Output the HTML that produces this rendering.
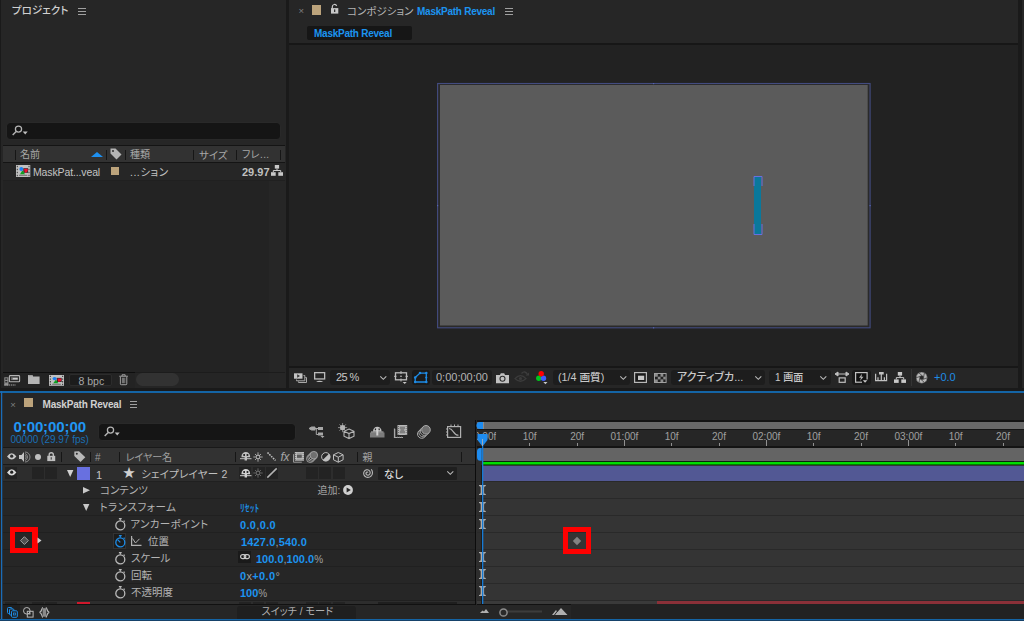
<!DOCTYPE html>
<html lang="ja">
<head>
<meta charset="utf-8">
<title>MaskPath Reveal</title>
<style>
html,body{margin:0;padding:0;}
body{width:1024px;height:621px;overflow:hidden;background:#1a1a1a;position:relative;
 font-family:"Liberation Sans","Noto Sans CJK JP",sans-serif;font-size:11px;color:#b4b4b4;}
.a{position:absolute;}
.t{position:absolute;white-space:nowrap;line-height:14px;}
.blue{color:#1c94f0;}
svg{position:absolute;overflow:visible;}
/* PANELS */
#proj{left:1px;top:0;width:285px;height:388px;background:#262626;}
#comp{left:289px;top:0;width:735px;height:388px;background:#262626;}
#viewer{left:289px;top:45px;width:735px;height:321px;background:#222222;}
#tl{left:0;top:393px;width:1024px;height:228px;background:#262626;}
#blueline{left:0;top:391px;width:1024px;height:2px;background:#1464a5;}

/* PROJECT */
.jp{font-feature-settings:"palt";}
#p_title{left:12px;top:3px;font-size:10.500px;color:#d0d0d0;font-weight:500;}
#p_search{left:7px;top:123px;width:273px;height:16px;background:#151515;border-radius:3.500px;box-shadow:0 0 0 0.500px #2c2c2c;}
#p_head{left:3px;top:145px;width:282px;height:18px;background:#141414;}
#p_head i{position:absolute;top:1px;height:16px;background:#323232;}
#p_row{left:3px;top:163px;width:282px;height:17px;background:#262626;border-bottom:1px solid #202020;}
.hsep{position:absolute;top:150px;width:1px;height:10px;background:#161616;}
#p_foot{left:3px;top:372px;width:282px;height:1px;background:#1c1c1c;}
#p_footbg{left:1px;top:373px;width:268px;height:15px;background:#232323;}
#p_foot2{left:3px;top:372px;width:132px;height:1px;background:#0e0e0e;}
#p_list{left:3px;top:181px;width:266px;height:191px;background:#232323;}
#p_colbg{left:269px;top:181px;width:16px;height:191px;background:#262626;}

/* COMP */
#c_tab{left:307px;top:26px;width:105px;height:14px;background:#161616;border-radius:2px;}
#c_line{left:289px;top:43px;width:735px;height:2px;background:#171717;}
#c_fline{left:289px;top:366px;width:735px;height:2px;background:#171717;}
#canvas{left:440px;top:85px;width:428px;height:241px;background:#5b5b5b;}
.dd{position:absolute;top:370px;height:15px;background:#1d1d1d;border-radius:3px;}
.ft{top:370px;font-size:11px;line-height:15px;color:#c8c8c8;}

/* TIMELINE */
#tl_l{left:1px;top:391px;width:1px;height:230px;background:#1a6cb8;box-shadow:1px 0 0 rgba(26,108,184,0.250);z-index:9;}
#tl_b{left:0;top:619px;width:1024px;height:1px;background:#1464a5;box-shadow:0 1px 0 #16426a, 0 2px 0 #1a1a1a;z-index:9;}
#tl_search{left:99px;top:424px;width:196px;height:15.500px;background:#151515;border-radius:3.500px;box-shadow:0 0 0 0.500px #2c2c2c;}
#tl_hdr{left:3px;top:447px;width:472px;height:18px;background:#191919;}
#tl_hdr i{position:absolute;left:0;top:1px;width:472px;height:16px;background:#323232;}
#tl_lrow{left:3px;top:465px;width:472px;height:16px;background:#2d2d2d;}
.rl{position:absolute;left:3px;width:472px;height:1px;background:#202020;}
.sw{position:absolute;top:467px;width:12px;height:12px;background:#232323;}
.tsep{position:absolute;top:452px;width:1px;height:10px;background:#161616;}
.pn{font-size:10.5px;color:#b4b4b4;}
.pv{font-size:11px;font-weight:bold;color:#1c94f0;margin-top:1px;}
.pv b{color:#a0a0a0;font-weight:normal;}
.pv b.s{font-size:10px;}
#trk{left:477px;top:465px;width:547px;height:139px;background:#343434;}
.trl{z-index:2;position:absolute;left:477px;width:547px;height:1px;background:#292929;}
#tdiv{left:475px;top:420px;width:1px;height:185px;background:#0c0c0c;}
.rt{font-size:10px;color:#a0a0a0;clip-path:inset(0 0 0 var(--c,0));}
</style>
</head>
<body>
<!-- ================= PROJECT PANEL ================= -->
<div id="proj" class="a"></div>
<div id="p_title" class="t jp">プロジェクト</div>
<svg style="left:78px;top:8px" width="9" height="7" viewBox="0 0 9 7"><path d="M0 .5h8M0 3.5h8M0 6.5h8" stroke="#a0a0a0" stroke-width="1" fill="none"/></svg>
<div id="p_search" class="a"></div>
<svg style="left:12px;top:125px" width="16" height="12" viewBox="0 0 16 12"><circle cx="6.500" cy="4.100" r="3.100" fill="none" stroke="#b4b4b4" stroke-width="1.250"/><path d="M4.200 6.500L0.700 10" stroke="#b4b4b4" stroke-width="1.400"/><path d="M10.700 6.500h5l-2.500 3z" fill="#c0c0c0"/></svg>
<div id="p_head" class="a"><i style="left:0;width:282px"></i></div>
<div class="hsep" style="left:15px"></div>
<div class="hsep" style="left:106px"></div>
<div class="hsep" style="left:125px"></div>
<div class="hsep" style="left:193px"></div>
<div class="hsep" style="left:236px"></div>
<div class="hsep" style="left:280px"></div>
<div class="t jp" style="left:20px;top:148px;font-size:10px;color:#a8a8a8">名前</div>
<svg style="left:91px;top:152px" width="12" height="5" viewBox="0 0 12 5"><path d="M0 5L6 0L12 5z" fill="#1e90f0"/></svg>
<svg style="left:110px;top:148px" width="12" height="12" viewBox="0 0 12 12"><path d="M0.5 0.5h5l6 6-5 5-6-6z" fill="#b4b4b4"/><circle cx="3" cy="3" r="1" fill="#303030"/></svg>
<div class="t jp" style="left:130px;top:148px;font-size:10px;color:#a8a8a8">種類</div>
<div class="t jp" style="left:199px;top:148px;font-size:10.500px;color:#a8a8a8">サイズ</div>
<div class="t jp" style="left:242px;top:148px;font-size:10px;color:#a8a8a8;letter-spacing:0.400px">フレ...</div>
<div id="p_row" class="a"></div>
<div id="p_colbg" class="a"></div>
<div class="t" style="left:33px;top:165px;font-size:10.500px;color:#c4c4c4;letter-spacing:-0.130px">MaskPat...veal</div>
<div class="a" style="left:111px;top:167px;width:8px;height:8px;background:#bca37b"></div>
<div class="t jp" style="left:130px;top:165px;font-size:10.500px;color:#c4c4c4;letter-spacing:0.500px">...ション</div>
<div class="t" style="left:242px;top:165px;font-size:11px;font-weight:bold;color:#c0c0c0">29.97</div>
<div id="p_list" class="a"></div>
<div id="p_foot" class="a"></div>
<div id="p_foot2" class="a"></div>
<div id="p_footbg" class="a"></div>

<!-- project icons -->
<svg style="left:16px;top:165px" width="14.3" height="12" viewBox="0 0 14.300 12" preserveAspectRatio="none"><rect x="0" y="0" width="14.300" height="12" fill="#c0c0c0"/><path d="M1.300 0.800v11M13 0.800v11" stroke="#3a3a3a" stroke-width="1" stroke-dasharray="1.400 1.600"/><path d="M3 10.300h8.300" stroke="#555" stroke-width="0.800"/><rect x="7.300" y="3.200" width="4.800" height="4.600" fill="#2a2a2a"/><path d="M8 3.800h3.700v2.300q-1 2-3 1.400z" fill="#f01030"/><path d="M6.500 5.300L9 9.300H4z" fill="#10a020"/><circle cx="5.300" cy="4" r="1.900" fill="#1e80f0"/></svg>
<svg style="left:271px;top:165.400px" width="12" height="11" viewBox="0 0 12 11"><rect x="3.800" y="0" width="4.300" height="3.600" fill="#c8c8c8"/><rect x="0" y="7.200" width="4.700" height="3.600" fill="#c8c8c8"/><rect x="7.300" y="7.200" width="4.700" height="3.600" fill="#c8c8c8"/><path d="M6 3.600v2M2.300 7.200V5.500h7.400v1.700" fill="none" stroke="#c8c8c8" stroke-width="1"/></svg>
<svg style="left:4px;top:375px" width="16" height="11" viewBox="0 0 16 11"><rect x="0.300" y="2.300" width="4.200" height="8.200" fill="#8c8c8c"/><rect x="1.300" y="3.300" width="2" height="1.500" fill="#2a2a2a"/><rect x="1.300" y="6" width="2" height="1.500" fill="#2a2a2a"/><path d="M0.300 10h11.500" stroke="#a8a8a8" stroke-width="1" stroke-dasharray="1.500 0.700"/><rect x="5.400" y="0.600" width="10.200" height="6.200" rx="0.800" fill="#2a2a2a" stroke="#b4b4b4" stroke-width="1.100"/><rect x="7.200" y="2.600" width="6.600" height="2.100" fill="#c8c8c8"/><rect x="7.200" y="2.600" width="1.400" height="2.100" fill="#555"/></svg>
<svg style="left:28.400px;top:374.500px" width="12" height="9" viewBox="0 0 12 9"><path d="M0 0h4.500l0.600 1.500H11.600V8.900H0z" fill="#b4b4b4"/><path d="M0.500 0.700h3.600" stroke="#8a8a8a" stroke-width="0.700"/></svg>
<svg style="left:49px;top:374.5px" width="15" height="10.8" viewBox="0 0 14.300 12" preserveAspectRatio="none"><rect x="0" y="0" width="14.300" height="12" fill="#c0c0c0"/><path d="M1.300 0.800v11M13 0.800v11" stroke="#3a3a3a" stroke-width="1" stroke-dasharray="1.400 1.600"/><path d="M3 10.300h8.300" stroke="#555" stroke-width="0.800"/><rect x="7.300" y="3.200" width="4.800" height="4.600" fill="#2a2a2a"/><path d="M8 3.800h3.700v2.300q-1 2-3 1.400z" fill="#f01030"/><path d="M6.500 5.300L9 9.300H4z" fill="#10a020"/><circle cx="5.300" cy="4" r="1.900" fill="#1e80f0"/></svg>
<div class="a" style="left:69px;top:374px;width:43px;height:12px;background:#1c1c1c;border:1px solid #2c2c2c;border-radius:2px;box-sizing:border-box"></div>
<div class="t" style="left:78.500px;top:373.500px;font-size:10.500px;color:#a8a8a8">8 bpc</div>
<svg style="left:119px;top:373.600px" width="9.200" height="11.500" viewBox="0 0 10 12"><path d="M0.300 2.200h9.400M3.300 1.900V0.600h3.400v1.300" fill="none" stroke="#acacac" stroke-width="1"/><path d="M1.500 3v7.500Q1.500 11.400 2.500 11.400h5Q8.500 11.400 8.500 10.500V3" fill="none" stroke="#acacac" stroke-width="1"/><path d="M3.700 3.800v6M6.300 3.800v6M5 3.800v6" stroke="#a0a0a0" stroke-width="0.800"/></svg>
<div class="a" style="left:135px;top:373px;width:134px;height:15px;background:#252525"></div>
<div class="a" style="left:136px;top:373px;width:43px;height:13px;background:#323232;border-radius:7px"></div>
<!-- ================= COMPOSITION PANEL ================= -->
<div id="comp" class="a"></div>
<div class="t" style="left:298.500px;top:4px;font-size:9.500px;color:#808080">×</div>
<div class="a" style="left:312px;top:5px;width:9px;height:9.500px;background:#bca37b"></div>
<svg style="left:330.900px;top:3.800px" width="8" height="10" viewBox="0 0 8 10"><path d="M1.300 4.500V2.700a2.200 2.200 0 0 1 4.300 -0.700" fill="none" stroke="#c8c8c8" stroke-width="1.200"/><rect x="0" y="4.100" width="7.300" height="5.500" fill="#c8c8c8"/><rect x="3" y="5.400" width="1.300" height="2.600" fill="#333"/></svg>
<div class="t jp" style="left:347px;top:4px;font-size:10.500px;color:#b4b4b4">コンポジション</div>
<div class="t blue" style="left:417px;top:5px;font-size:10px;font-weight:bold;letter-spacing:-0.250px">MaskPath Reveal</div>
<svg style="left:504.500px;top:8px" width="9" height="7" viewBox="0 0 9 7"><path d="M0 .5h8M0 3.5h8M0 6.5h8" stroke="#a0a0a0" stroke-width="1" fill="none"/></svg>
<div id="c_tab" class="a"></div>
<div class="t blue" style="left:314px;top:27px;font-size:10px;font-weight:bold;letter-spacing:-0.250px">MaskPath Reveal</div>
<div id="c_line" class="a"></div>
<div id="viewer" class="a"></div>
<svg style="left:0;top:0" width="1024" height="400" viewBox="0 0 1024 400">
<rect x="437.600" y="83.500" width="432.500" height="244.300" fill="#2a2a2a" stroke="#434c80" stroke-width="1.100"/>
<rect x="440" y="85" width="427.700" height="240.500" fill="#5b5b5b"/>
<g fill="#5564b4"><rect x="653" y="83" width="1.200" height="1.200"/><rect x="653" y="327.200" width="1.200" height="1.200"/><rect x="437" y="205" width="1.200" height="1.200"/><rect x="869.500" y="205" width="1.200" height="1.200"/></g>
</svg>
<div class="a" style="left:754px;top:176px;width:7px;height:59px;background:#0a789b"></div>
<svg style="left:750px;top:172px" width="16" height="68" viewBox="0 0 16 68">
<path d="M4 14V4.5h8V14M4 52V62.5h8V52" fill="none" stroke="#6870e0" stroke-width="1"/>
</svg>
<div id="c_fline" class="a"></div>
<!-- footer controls -->
<div class="dd" style="left:330px;width:60px"></div>
<div class="t ft" style="left:336px;letter-spacing:-0.600px">25 %</div>
<div class="dd" style="left:412px;width:18px;background:#1a1a1a"></div>
<div class="dd" style="left:432px;width:60px"></div>
<div class="t ft" style="left:436px;color:#b4b4b4">0;00;00;00</div>
<div class="dd" style="left:553px;width:77px"></div>
<div class="t ft jp" style="left:558px;font-size:10.700px;font-weight:500">(1/4 画質)</div>
<div class="dd" style="left:671px;width:94px"></div>
<div class="t ft jp" style="left:677px;font-weight:500">アクティブカ...</div>
<div class="dd" style="left:769px;width:62px"></div>
<div class="t ft jp" style="left:775px;font-weight:500;font-size:10px">1 画面</div>
<div class="dd" style="left:852px;width:19px;background:#1a1a1a"></div>
<div class="a" style="left:911px;top:369px;width:1px;height:17px;background:#343434"></div>
<div class="t ft" style="left:934px;color:#1e8ce6">+0.0</div>
<!-- ================= TIMELINE PANEL ================= -->
<div class="a" style="left:1018px;top:0;width:4px;height:388px;background:#1a1a1a"></div>
<div class="a" style="left:1022px;top:0;width:2px;height:388px;background:#262626"></div>
<div id="blueline" class="a"></div>
<div id="tl" class="a"></div>
<div id="tl_l" class="a"></div>
<div id="tl_b" class="a"></div>
<!-- tab -->
<div class="t" style="left:10.300px;top:397.500px;font-size:9.500px;color:#808080">×</div>
<div class="a" style="left:24px;top:398px;width:9px;height:9px;background:#bca37b"></div>
<div class="t" style="left:42.500px;top:398px;font-size:10px;font-weight:bold;color:#d0d0d0;letter-spacing:-0.2px">MaskPath Reveal</div>
<svg style="left:130px;top:401px" width="8" height="7" viewBox="0 0 8 7"><path d="M0 .5h7M0 3.5h7M0 6.5h7" stroke="#a0a0a0" stroke-width="1" fill="none"/></svg>
<!-- timecode -->
<div class="t" style="left:13.500px;top:417.500px;font-size:15px;line-height:18px;font-weight:bold;color:#2196f3;letter-spacing:-0.100px">0;00;00;00</div>
<div class="t" style="left:10.500px;top:433px;font-size:10px;color:#1a6fb5">00000 (29.97 fps)</div>
<div id="tl_search" class="a"></div>
<svg style="left:104px;top:426px" width="16" height="12" viewBox="0 0 16 12"><circle cx="6.500" cy="4.100" r="3.100" fill="none" stroke="#b4b4b4" stroke-width="1.250"/><path d="M4.200 6.500L0.700 10" stroke="#b4b4b4" stroke-width="1.400"/><path d="M10.700 6.500h5l-2.500 3z" fill="#c0c0c0"/></svg>
<!-- column header -->
<div id="tl_hdr" class="a"><i></i></div>
<div class="tsep" style="left:61px"></div>
<div class="tsep" style="left:90px"></div>
<div class="tsep" style="left:119px"></div>
<div class="tsep" style="left:235px"></div>
<div class="tsep" style="left:357px"></div>
<div class="tsep" style="left:461px"></div>
<div class="t" style="left:95px;top:450.500px;font-size:10px;color:#9a9a9a">#</div>
<div class="t jp" style="left:125.500px;top:450.500px;font-size:10px;color:#a0a0a0">レイヤー名</div>
<div class="t jp" style="left:362.500px;top:450.500px;font-size:10px;color:#a0a0a0">親</div>
<!-- layer row -->
<div id="tl_lrow" class="a"></div>
<div class="sw" style="left:5px"></div>
<div class="sw" style="left:32px"></div>
<div class="sw" style="left:45px"></div>
<svg style="left:67px;top:470px" width="7" height="7" viewBox="0 0 7 7"><path d="M0 0h6.4L3.2 7z" fill="#d0d0d0"/></svg>
<div class="a" style="left:77px;top:467px;width:13px;height:13px;background:#6870e0"></div>
<div class="t" style="left:96px;top:467.500px;font-size:11px;color:#c4c4c4">1</div>
<div class="t" style="left:122.800px;top:465px;font-size:12.500px;line-height:16px;color:#d0d0d0">★</div>
<div class="t jp" style="left:141px;top:467px;font-size:10.500px;color:#c0c0c0;letter-spacing:0.200px">シェイプレイヤー 2</div>
<div class="sw" style="left:239px"></div>
<div class="sw" style="left:253px"></div>
<div class="sw" style="left:266px"></div>
<div class="sw" style="left:306px"></div>
<div class="sw" style="left:319px"></div>
<div class="sw" style="left:333px"></div>
<div class="a" style="left:378px;top:467px;width:79px;height:12.500px;background:#1f1f1f;border-radius:1px"></div>
<div class="t jp" style="left:384px;top:467px;font-size:10.500px;font-weight:500;color:#d8d8d8">なし</div>
<!-- property rows -->
<div class="rl" style="top:481px"></div>
<div class="trl" style="top:481px"></div>
<div class="rl" style="top:498px"></div>
<div class="trl" style="top:498px"></div>
<div class="rl" style="top:515px"></div>
<div class="trl" style="top:515px"></div>
<div class="rl" style="top:532px"></div>
<div class="trl" style="top:532px"></div>
<div class="rl" style="top:549px"></div>
<div class="trl" style="top:549px"></div>
<div class="rl" style="top:566px"></div>
<div class="trl" style="top:566px"></div>
<div class="rl" style="top:583px"></div>
<div class="trl" style="top:583px"></div>
<div class="rl" style="top:600px"></div>
<div class="trl" style="top:600px"></div>
<svg style="left:83px;top:487px" width="7" height="7" viewBox="0 0 7 7"><path d="M0 0v6.4L7 3.2z" fill="#c8c8c8"/></svg>
<div class="t jp pn" style="left:100px;top:483px">コンテンツ</div>
<div class="t jp pn" style="left:317.500px;top:483.500px;color:#a4a4a4;font-size:10px">追加:</div>
<svg style="left:83px;top:504px" width="7" height="7" viewBox="0 0 7 7"><path d="M0 0h6.4L3.2 7z" fill="#c8c8c8"/></svg>
<div class="t jp pn" style="left:99.500px;top:500px;letter-spacing:0.550px">トランスフォーム</div>
<div class="t jp pv" style="left:240px;top:500px;font-weight:500;font-size:10.500px;transform:scaleX(0.920);transform-origin:0 0">ﾘｾｯﾄ</div>
<div class="t jp pn" style="left:130.500px;top:517px;letter-spacing:0.300px">アンカーポイント</div>
<div class="t pv" style="left:240px;top:517px;letter-spacing:0.350px">0.0<b>,</b>0.0</div>
<div class="t jp pn" style="left:148px;top:534px">位置</div>
<div class="t pv" style="left:241px;top:534px;letter-spacing:0.150px">1427.0<b>,</b>540.0</div>
<div class="t jp pn" style="left:131px;top:551px">スケール</div>
<div class="t pv" style="left:256px;top:551px">100.0<b>,</b>100.0<b class="s">%</b></div>
<div class="t jp pn" style="left:131px;top:568px">回転</div>
<div class="t pv" style="left:240px;top:568px;letter-spacing:0.350px">0<b>x</b>+0.0<b>°</b></div>
<div class="t jp pn" style="left:131px;top:585px">不透明度</div>
<div class="t pv" style="left:240px;top:585px">100<b class="s">%</b></div>
<!-- red annotation left -->
<div class="a" style="left:10px;top:527px;width:17px;height:16px;border:5px solid #ff0000;border-right-width:6px"></div>
<svg style="left:19px;top:535px" width="11" height="11" viewBox="0 0 11 11"><path d="M5.400 1.700L9.300 5.600L5.400 9.500L1.500 5.600z" fill="#505050" stroke="#a0a0a0" stroke-width="1"/></svg>
<svg style="left:37px;top:537px" width="5" height="7" viewBox="0 0 5 7"><path d="M0.5 0.5v6L4.5 3.5z" fill="#d0d0d0"/></svg>
<!-- footer -->
<div class="a" style="left:3px;top:604px;width:472px;height:1px;background:#111"></div>
<div class="a" style="left:237px;top:606px;width:119px;height:13px;background:#1f1f1f;border-radius:3px 3px 0 0"></div>
<div class="t jp" style="left:261.500px;top:605px;font-size:10.200px;color:#b0b0b0">スイッチ / モード</div>
<!-- ============ time ruler & tracks ============ -->
<div id="tdiv" class="a"></div>
<div class="a" style="left:477px;top:420px;width:547px;height:2px;background:#141414"></div>
<div class="a" style="left:477px;top:422px;width:547px;height:7px;background:#696969"></div>
<div class="a" style="left:477px;top:429px;width:547px;height:1px;background:#141414"></div>
<div class="a" style="left:481.9px;top:440px;width:1px;height:6px;background:#909090"></div>
<div class="t rt" style="left:474px;top:430px;--c:3px">0:00f</div>
<div class="a" style="left:529.2px;top:443px;width:1px;height:3px;background:#909090"></div>
<div class="t rt" style="left:499.7px;top:430px;width:60px;text-align:center">10f</div>
<div class="a" style="left:576.6px;top:443px;width:1px;height:3px;background:#909090"></div>
<div class="t rt" style="left:547.1px;top:430px;width:60px;text-align:center">20f</div>
<div class="a" style="left:623.9px;top:440px;width:1px;height:6px;background:#909090"></div>
<div class="t rt" style="left:594.4px;top:430px;width:60px;text-align:center">01:00f</div>
<div class="a" style="left:671.2px;top:443px;width:1px;height:3px;background:#909090"></div>
<div class="t rt" style="left:641.7px;top:430px;width:60px;text-align:center">10f</div>
<div class="a" style="left:718.5px;top:443px;width:1px;height:3px;background:#909090"></div>
<div class="t rt" style="left:689.0px;top:430px;width:60px;text-align:center">20f</div>
<div class="a" style="left:765.9px;top:440px;width:1px;height:6px;background:#909090"></div>
<div class="t rt" style="left:736.4px;top:430px;width:60px;text-align:center">02:00f</div>
<div class="a" style="left:813.2px;top:443px;width:1px;height:3px;background:#909090"></div>
<div class="t rt" style="left:783.7px;top:430px;width:60px;text-align:center">10f</div>
<div class="a" style="left:860.5px;top:443px;width:1px;height:3px;background:#909090"></div>
<div class="t rt" style="left:831.0px;top:430px;width:60px;text-align:center">20f</div>
<div class="a" style="left:907.9px;top:440px;width:1px;height:6px;background:#909090"></div>
<div class="t rt" style="left:878.4px;top:430px;width:60px;text-align:center">03:00f</div>
<div class="a" style="left:955.2px;top:443px;width:1px;height:3px;background:#909090"></div>
<div class="t rt" style="left:925.7px;top:430px;width:60px;text-align:center">10f</div>
<div class="a" style="left:1002.5px;top:443px;width:1px;height:3px;background:#909090"></div>
<div class="t rt" style="left:973.0px;top:430px;width:60px;text-align:center">20f</div>
<div class="a" style="left:477px;top:446px;width:547px;height:2px;background:#141414"></div>
<div class="a" style="left:483px;top:448px;width:541px;height:13px;background:#646464"></div>
<div class="a" style="left:477px;top:461px;width:547px;height:4px;background:#2a2a2a"></div>
<div class="a" style="left:477px;top:461px;width:547px;height:1px;background:#1a1a1a"></div>
<div class="a" style="left:483px;top:461px;width:541px;height:5px;background:#0c200c"></div>
<div class="a" style="left:483px;top:462px;width:541px;height:2px;background:#00dc00"></div>
<div class="a" style="left:483px;top:464px;width:541px;height:1px;background:#007a00"></div>
<div id="trk" class="a"></div>
<div class="a" style="left:483px;top:466px;width:541px;height:15px;background:#525894;z-index:1"></div>

<!-- strip left of playhead -->
<div class="a" style="left:476px;top:448px;width:7px;height:156px;background:#2d2d2d;z-index:1"></div>
<svg style="left:479.200px;top:484.5px;z-index:3" width="7" height="10" viewBox="0 0 7 10"><path d="M0 0h6.800v1Q5.100 1 5.100 2.500V7.500Q5.100 9 6.800 9v1h-6.800v-1Q1.700 9 1.700 7.500V2.500Q1.700 1 0 1z" fill="#acacac"/></svg>
<svg style="left:479.200px;top:501.5px;z-index:3" width="7" height="10" viewBox="0 0 7 10"><path d="M0 0h6.800v1Q5.100 1 5.100 2.500V7.500Q5.100 9 6.800 9v1h-6.800v-1Q1.700 9 1.700 7.500V2.500Q1.700 1 0 1z" fill="#acacac"/></svg>
<svg style="left:479.200px;top:518.5px;z-index:3" width="7" height="10" viewBox="0 0 7 10"><path d="M0 0h6.800v1Q5.100 1 5.100 2.500V7.500Q5.100 9 6.800 9v1h-6.800v-1Q1.700 9 1.700 7.500V2.500Q1.700 1 0 1z" fill="#acacac"/></svg>
<svg style="left:479.200px;top:552px;z-index:3" width="7" height="10" viewBox="0 0 7 10"><path d="M0 0h6.800v1Q5.100 1 5.100 2.500V7.500Q5.100 9 6.800 9v1h-6.800v-1Q1.700 9 1.700 7.500V2.500Q1.700 1 0 1z" fill="#acacac"/></svg>
<svg style="left:479.200px;top:569px;z-index:3" width="7" height="10" viewBox="0 0 7 10"><path d="M0 0h6.800v1Q5.100 1 5.100 2.500V7.500Q5.100 9 6.800 9v1h-6.800v-1Q1.700 9 1.700 7.500V2.500Q1.700 1 0 1z" fill="#acacac"/></svg>
<svg style="left:479.200px;top:586px;z-index:3" width="7" height="10" viewBox="0 0 7 10"><path d="M0 0h6.800v1Q5.100 1 5.100 2.500V7.500Q5.100 9 6.800 9v1h-6.800v-1Q1.700 9 1.700 7.500V2.500Q1.700 1 0 1z" fill="#acacac"/></svg>
<!-- partial next row + red bar -->
<div class="a" style="left:477px;top:601px;width:547px;height:3px;background:#3a3a3a;z-index:2"></div>
<div class="a" style="left:657px;top:601px;width:367px;height:3px;background:#8b3038;z-index:3"></div>
<div class="a" style="left:477px;top:604px;width:94px;height:1px;background:#111;z-index:3"></div>
<div class="a" style="left:571px;top:604px;width:453px;height:15px;background:#222222"></div>
<!-- navigator + work-area handles -->
<svg style="left:476px;top:422px;z-index:4" width="8" height="7" viewBox="0 0 8 7"><path d="M8 0H4a3.5 3.5 0 0 0 0 7h4z" fill="#1e8cf0"/></svg>
<div class="a" style="left:483px;top:422px;width:1px;height:7px;background:#8c8c8c;z-index:4"></div>
<svg style="left:477px;top:447.800px;z-index:4" width="5" height="13" viewBox="0 0 5 13"><path d="M4.700 0H3.500a3.500 3.500 0 0 0-3.500 3.500v5.700a3.500 3.500 0 0 0 3.500 3.500h1.200z" fill="#1e8cf0"/></svg>
<!-- playhead -->
<div class="a" style="left:481px;top:465px;width:1px;height:139px;background:#1e1c1a;z-index:2"></div>
<div class="a" style="left:482px;top:446px;width:1px;height:158px;background:#167ad4;z-index:5"></div>
<div class="a" style="left:483px;top:446px;width:1px;height:158px;background:rgba(22,122,212,0.300);z-index:5"></div>
<svg style="left:477px;top:434px;z-index:6" width="11" height="13" viewBox="0 0 11 13"><path d="M0.5 0h10v6L5.5 12.5L0.500 6z" fill="#1e8cf0"/><path d="M5.5 5v7" stroke="#9ab" stroke-width="1"/></svg>
<!-- red annotation right + keyframe -->
<div class="a" style="left:563px;top:527px;width:18px;height:17px;border:5px solid #ff0000;z-index:7"></div>
<svg style="left:572px;top:536px;z-index:8" width="10" height="10" viewBox="0 0 10 10"><path d="M5 .8L9.200 5L5 9.200L.8 5z" fill="#828282"/></svg>
<!-- zoom slider -->
<svg style="left:480px;top:608px" width="90" height="10" viewBox="0 0 90 10">
<path d="M0 5l2.500-2.500 1.500 1 2-2.500L9 5z" fill="#b0b0b0"/>
<path d="M27 3.500h35" stroke="#3c3c3c" stroke-width="2"/>
<circle cx="23.500" cy="4.500" r="3.600" fill="#2a2a2a" stroke="#8c8c8c" stroke-width="1.500"/>
<path d="M72 7l4-5 1.500 2L81 0l6.500 7z" fill="#b0b0b0"/><path d="M74.500 7l3-4" stroke="#262626" stroke-width="1"/>
</svg>

<!-- header AV icons -->
<svg style="left:6.5px;top:453.3px;z-index:3" width="10" height="7" viewBox="0 0 10 7"><path d="M0 3.400Q2.400 0.200 4.700 0.200Q7 0.200 9.400 3.400Q7 6.500 4.700 6.500Q2.400 6.500 0 3.400z" fill="#c8c8c8"/><circle cx="4.700" cy="3.200" r="1.600" fill="#2d2d2d"/></svg>
<svg style="left:19px;top:452px;z-index:3" width="12" height="10" viewBox="0 0 12 10"><path d="M0 3h2.500L5 0v10L2.500 7H0z" fill="#c4c4c4"/><path d="M6 1.500A3.700 3.700 0 0 1 6 8.500M6 0A5 5 0 0 1 6 10M6 3.200A2 2 0 0 1 6 6.800" fill="none" stroke="#8a8a8a" stroke-width="1"/></svg>
<div class="a" style="left:34.500px;top:453.600px;width:6.500px;height:6.500px;border-radius:50%;background:#c0c0c0;z-index:3"></div>
<svg style="left:46.800px;top:451.500px;z-index:3" width="8.500" height="9.500" viewBox="0 0 9 10"><path d="M2.300 4.500V3a2.200 2.200 0 0 1 4.400 0v1.500" fill="none" stroke="#c0c0c0" stroke-width="1.400"/><rect x="0.300" y="4" width="8.400" height="5.600" fill="#c0c0c0"/><rect x="3.900" y="5.500" width="1.200" height="2.500" fill="#444"/></svg>
<svg style="left:73.500px;top:451px;z-index:3" width="12" height="11" viewBox="0 0 12 11"><path d="M0.300 0.500L5 0.300L11.300 6.300L6.500 11L0.300 5z" fill="#b8b8b8"/><circle cx="2.800" cy="2.700" r="1" fill="#2d2d2d"/></svg>
<!-- header switches -->
<svg style="left:239.5px;top:452px;z-index:3" width="12" height="9" viewBox="0 0 12 9"><path d="M1.500 5.300V4.200A4.300 4.300 0 0 1 10.100 4.200V5.300z" fill="#c0c0c0"/><rect x="3.300" y="2" width="1.700" height="2" fill="#2a2a2a"/><rect x="6.600" y="2" width="1.700" height="2" fill="#2a2a2a"/><path d="M0 6.700h11.500" stroke="#c0c0c0" stroke-width="1"/><path d="M5.800 4.500v4" stroke="#c0c0c0" stroke-width="2.400"/></svg>
<svg style="left:253.4px;top:451.8px;z-index:3" width="10" height="10" viewBox="0 0 10 10"><path d="M5 0.300v2.400M5 7.300v2.400M0.300 5h2.400M7.300 5h2.400M2 2l1.400 1.400M6.600 6.600L8 8M8 2L6.600 3.400M3.400 6.600L2 8" stroke="#b0b0b0" stroke-width="0.900"/><circle cx="5" cy="5" r="1.900" fill="none" stroke="#b0b0b0" stroke-width="1.100"/></svg>
<svg style="left:267px;top:452px;z-index:3" width="9" height="9" viewBox="0 0 9 9"><path d="M0.500 0.500L8.500 8.500" stroke="#c0c0c0" stroke-width="1.500" stroke-dasharray="1.600 1"/></svg>
<div class="t" style="left:280.500px;top:450px;font-size:12px;font-style:italic;color:#a4a4a4;letter-spacing:-0.300px;z-index:3">fx</div>
<svg style="left:292.500px;top:451.800px;z-index:3" width="11" height="11" viewBox="0 0 11 11"><path d="M0.500 2.200v8h8.300" fill="none" stroke="#9a9a9a" stroke-width="1"/><rect x="1.800" y="0" width="9.200" height="8.700" fill="#bdbdbd"/><rect x="4" y="2.600" width="4.800" height="3.300" fill="#5a5a5a"/><path d="M2.700 1v7M10.100 1v7" stroke="#666" stroke-width="0.900" stroke-dasharray="1 1"/><path d="M4 1.300h4.800M4 7.200h4.800" stroke="#8a8a8a" stroke-width="0.800"/></svg>
<svg style="left:306px;top:451px;z-index:3" width="12" height="12" viewBox="0 0 12 12"><circle cx="4.300" cy="7.700" r="3.800" fill="none" stroke="#a8a8a8" stroke-width="0.900"/><circle cx="5.500" cy="6.500" r="3.800" fill="#2d2d2d" stroke="#a8a8a8" stroke-width="0.900"/><circle cx="6.600" cy="5.400" r="3.800" fill="#2d2d2d" stroke="#a8a8a8" stroke-width="0.900"/><circle cx="7.800" cy="4.200" r="3.800" fill="#707070" stroke="#a8a8a8" stroke-width="0.900"/></svg>
<svg style="left:320.500px;top:452px;z-index:3" width="10" height="10" viewBox="0 0 10 10"><circle cx="4.800" cy="4.800" r="4.200" fill="#2a2a2a" stroke="#c0c0c0" stroke-width="1"/><path d="M8 1.700A4.400 4.400 0 0 1 1.700 8z" fill="#c0c0c0"/></svg>
<svg style="left:333px;top:451.800px;z-index:3" width="11" height="11" viewBox="0 0 11 11"><path d="M5.300 0.500L10.100 2.800V7.800L5.300 10.200L0.500 7.800V2.800zM0.500 2.800L5.300 5.200L10.100 2.800M5.300 5.200V10.200" fill="none" stroke="#c0c0c0" stroke-width="1"/></svg>
<!-- layer row icons -->
<svg style="left:6.5px;top:469.4px;z-index:3" width="10" height="7" viewBox="0 0 10 7"><path d="M0 3.400Q2.400 0.200 4.700 0.200Q7 0.200 9.400 3.400Q7 6.500 4.700 6.500Q2.400 6.500 0 3.400z" fill="#d8d8d8"/><circle cx="4.700" cy="3.200" r="1.600" fill="#232323"/></svg>
<svg style="left:239.5px;top:468.5px;z-index:3" width="12" height="9" viewBox="0 0 12 9"><path d="M1.500 5.300V4.200A4.300 4.300 0 0 1 10.100 4.200V5.300z" fill="#d0d0d0"/><rect x="3.300" y="2" width="1.700" height="2" fill="#2a2a2a"/><rect x="6.600" y="2" width="1.700" height="2" fill="#2a2a2a"/><path d="M0 6.700h11.500" stroke="#d0d0d0" stroke-width="1"/><path d="M5.800 4.500v4" stroke="#d0d0d0" stroke-width="2.400"/></svg>
<svg style="left:253.4px;top:468.3px;z-index:3" width="10" height="10" viewBox="0 0 10 10"><path d="M5 0.300v2.400M5 7.300v2.400M0.300 5h2.400M7.300 5h2.400M2 2l1.400 1.400M6.600 6.600L8 8M8 2L6.600 3.400M3.400 6.600L2 8" stroke="#6a6a6a" stroke-width="0.900"/><circle cx="5" cy="5" r="1.900" fill="none" stroke="#6a6a6a" stroke-width="1.100"/></svg>
<svg style="left:267px;top:468px;z-index:3" width="10" height="10" viewBox="0 0 10 10"><path d="M0.300 9.600L9.700 0.400" stroke="#b4b4b4" stroke-width="1.500"/></svg>
<!-- pickwhip spiral -->
<svg style="left:361.5px;top:467.800px;z-index:3" width="11" height="10" viewBox="0 0 11 10"><path d="M9.48 1.66 L10.01 2.55 L10.33 3.52 L10.46 4.52 L10.38 5.51 L10.11 6.45 L9.66 7.31 L9.06 8.04 L8.34 8.64 L7.53 9.06 L6.66 9.31 L5.77 9.39 L4.90 9.28 L4.08 9.00 L3.35 8.58 L2.73 8.02 L2.24 7.37 L1.90 6.64 L1.72 5.87 L1.69 5.10 L1.82 4.35 L2.09 3.66 L2.49 3.05 L2.99 2.54 L3.58 2.15 L4.21 1.89 L4.87 1.77 L5.53 1.78 L6.15 1.92 L6.73 2.18 L7.22 2.54 L7.62 2.99 L7.92 3.49 L8.10 4.03 L8.17 4.58 L8.13 5.11 L7.98 5.62 L7.74 6.07 L7.43 6.45 L7.05 6.75 L6.63 6.96 L6.20 7.08 L5.76 7.10 L5.34 7.04 L4.96 6.90 L4.62 6.69 L4.35 6.42 L4.15 6.12 L4.02 5.79 L3.96 5.46 L3.97 5.13 L4.05 4.83 L4.18 4.57 L4.36 4.35 L4.56 4.19 L4.79 4.07 L5.02 4.02 L5.24 4.01 L5.45 4.05 L5.63 4.14 L5.77 4.25" fill="none" stroke="#b8b8b8" stroke-width="1.100" stroke-linecap="round"/></svg>
<svg style="left:446.500px;top:471.300px;z-index:3" width="7" height="4" viewBox="0 0 7 4"><path d="M0.300 0.300L3.300 3.300L6.300 0.300" fill="none" stroke="#b8b8b8" stroke-width="1.100"/></svg>
<!-- timeline toolbar icons -->
<svg style="left:309px;top:426px" width="16" height="12" viewBox="0 0 16 12"><path d="M0 2.500L2.500 1h3.500v3H2.500zM6 2.500h3M7.300 2.500v6h2" fill="none" stroke="#a8a8a8" stroke-width="1"/><path d="M0 2.500L2.500 1h3.500v3H2.500z" fill="#a8a8a8"/><rect x="9" y="1" width="5" height="3" fill="#a8a8a8"/><rect x="9" y="6.500" width="5" height="3" fill="#a8a8a8"/><path d="M11.500 10h4l-2 2z" fill="#a8a8a8"/></svg>
<svg style="left:338px;top:423px" width="17" height="16" viewBox="0 0 17 16"><path d="M4.600 0v9.200M0 4.600h9.200M1.400 1.400l6.400 6.400M7.800 1.400l-6.400 6.400" stroke="#a0a0a0" stroke-width="0.800"/><circle cx="4.600" cy="4.600" r="2.600" fill="#b4b4b4"/><path d="M11 6L16 8.300V13.200L11 15.600L6 13.200V8.300z" fill="#262626"/><path d="M11 6L16 8.300V13.200L11 15.600L6 13.200V8.300zM6 8.300L11 10.600L16 8.300M11 10.600V15.600" fill="none" stroke="#b4b4b4" stroke-width="1.100"/></svg>
<svg style="left:370px;top:425.500px" width="15" height="12" viewBox="0 0 15 12"><rect x="0" y="6.500" width="14.500" height="5" fill="#7c7c7c"/><path d="M3 5.500A4.300 4.800 0 0 1 11.600 5.500z" fill="#c0c0c0"/><rect x="4.800" y="2.500" width="1.300" height="1.700" fill="#262626"/><rect x="8.500" y="2.500" width="1.300" height="1.700" fill="#262626"/><path d="M1 6h12.500" stroke="#c0c0c0" stroke-width="1"/><path d="M7.300 3.500v6" stroke="#d0d0d0" stroke-width="2"/></svg>
<svg style="left:394px;top:425px" width="14" height="13" viewBox="0 0 14 13"><path d="M0.500 3.500v9h8.500" fill="none" stroke="#a8a8a8" stroke-width="1.200"/><path d="M1.500 4.500v7M3 12h6" stroke="#777" stroke-width="0.800" stroke-dasharray="1 1"/><rect x="3.500" y="0" width="9.700" height="10" fill="#b8b8b8"/><rect x="5.700" y="1.500" width="5.300" height="2.600" fill="#808080"/><rect x="5.700" y="5.800" width="5.300" height="2.600" fill="#808080"/><path d="M6.500 5h3.700" stroke="#555" stroke-width="1"/><path d="M4.500 1v8.500M12.200 1v8.500" stroke="#666" stroke-width="0.900" stroke-dasharray="1 1"/></svg>
<svg style="left:416.500px;top:424.500px" width="14" height="14" viewBox="0 0 14 14"><circle cx="4.800" cy="9" r="4.300" fill="none" stroke="#a8a8a8" stroke-width="1"/><circle cx="6.200" cy="7.600" r="4.300" fill="#262626" stroke="#a8a8a8" stroke-width="1"/><circle cx="7.600" cy="6.200" r="4.300" fill="#262626" stroke="#a8a8a8" stroke-width="1"/><circle cx="9" cy="4.800" r="4.300" fill="#707070" stroke="#a8a8a8" stroke-width="1"/></svg>
<svg style="left:446px;top:424px" width="16" height="14" viewBox="0 0 16 14"><rect x="1.600" y="2.600" width="13" height="10.800" fill="none" stroke="#b0b0b0" stroke-width="1.200"/><path d="M5 0.500v2M8.500 0.500v2M12 0.500v2M0 5h1.500M0 8h1.500M0 11h1.500" stroke="#b0b0b0" stroke-width="1"/><path d="M3 4.500C7.500 4.500 7 11.300 12.500 11.300" fill="none" stroke="#b0b0b0" stroke-width="1.100"/></svg>
<!-- stopwatches -->
<svg style="left:114.8px;top:517.5px;z-index:3" width="11" height="13" viewBox="0 0 11 13"><circle cx="5.300" cy="7.400" r="4.500" fill="none" stroke="#b8b8b8" stroke-width="1.300"/><path d="M3.900 0.600h2.800M5.300 0.600v2M8.700 2.700l1 1" stroke="#b8b8b8" stroke-width="1.200" fill="none"/></svg>
<svg style="left:114.8px;top:551.5px;z-index:3" width="11" height="13" viewBox="0 0 11 13"><circle cx="5.300" cy="7.400" r="4.500" fill="none" stroke="#b8b8b8" stroke-width="1.300"/><path d="M3.900 0.600h2.800M5.300 0.600v2M8.700 2.700l1 1" stroke="#b8b8b8" stroke-width="1.200" fill="none"/></svg>
<svg style="left:114.8px;top:568.5px;z-index:3" width="11" height="13" viewBox="0 0 11 13"><circle cx="5.300" cy="7.400" r="4.500" fill="none" stroke="#b8b8b8" stroke-width="1.300"/><path d="M3.900 0.600h2.800M5.300 0.600v2M8.700 2.700l1 1" stroke="#b8b8b8" stroke-width="1.200" fill="none"/></svg>
<svg style="left:114.8px;top:585.5px;z-index:3" width="11" height="13" viewBox="0 0 11 13"><circle cx="5.300" cy="7.400" r="4.500" fill="none" stroke="#b8b8b8" stroke-width="1.300"/><path d="M3.900 0.600h2.800M5.300 0.600v2M8.700 2.700l1 1" stroke="#b8b8b8" stroke-width="1.200" fill="none"/></svg>
<div class="a" style="left:113px;top:533px;width:13px;height:16px;background:#1c1c1c;border:1px solid #333;box-sizing:border-box;z-index:2"></div>
<svg style="left:114.800px;top:534.500px;z-index:3" width="11" height="13" viewBox="0 0 11 13"><circle cx="5.300" cy="7.400" r="4.500" fill="none" stroke="#1e8ce6" stroke-width="1.300"/><path d="M3.900 0.600h2.800M5.300 0.600v2M8.700 2.700l1 1M5.300 7.400L2.800 4.800" stroke="#1e8ce6" stroke-width="1.200" fill="none"/></svg>
<svg style="left:130.500px;top:536px;z-index:3" width="11" height="10" viewBox="0 0 11 10"><path d="M0.600 0v9.400H10.500" fill="none" stroke="#b0b0b0" stroke-width="1.200"/><path d="M1.500 2.500L4.500 7L8.500 2.800" fill="none" stroke="#b0b0b0" stroke-width="1"/></svg>
<svg style="left:342.500px;top:484.500px;z-index:3" width="10" height="10" viewBox="0 0 10 10"><circle cx="5" cy="5" r="4.900" fill="#d0d0d0"/><path d="M3.600 2.400v5.200L7.800 5z" fill="#262626"/></svg>
<div class="a" style="left:238px;top:551px;width:13px;height:12px;background:#1a1a1a;z-index:2"></div>
<svg style="left:239.500px;top:554px;z-index:3" width="10" height="6" viewBox="0 0 10 6"><rect x="0.600" y="0.700" width="5.200" height="4" rx="2" fill="none" stroke="#c8c8c8" stroke-width="1.200"/><rect x="4.200" y="0.700" width="5.200" height="4" rx="2" fill="none" stroke="#c8c8c8" stroke-width="1.200"/></svg>
<div class="a" style="left:3px;top:605px;width:17px;height:14px;background:#1f1f1f"></div>
<svg style="left:7px;top:607px;z-index:3" width="11" height="11" viewBox="0 0 11 11"><rect x="0.500" y="0.500" width="4.500" height="6" rx="1" fill="none" stroke="#1e8ce6" stroke-width="1"/><rect x="2.500" y="2" width="4.500" height="6" rx="1" fill="#1f1f1f" stroke="#1e8ce6" stroke-width="1"/><rect x="4.500" y="3.800" width="5.800" height="6.500" rx="1" fill="#1f1f1f" stroke="#1e8ce6" stroke-width="1"/><rect x="6.500" y="6" width="2" height="2" fill="none" stroke="#1e8ce6" stroke-width="0.800"/></svg>
<svg style="left:23px;top:607px;z-index:3" width="11" height="11" viewBox="0 0 11 11"><circle cx="3.800" cy="3.800" r="3.300" fill="none" stroke="#b8b8b8" stroke-width="1"/><rect x="4.300" y="4.300" width="5.800" height="5.800" fill="none" stroke="#b8b8b8" stroke-width="1"/><path d="M5 7.500L7.500 5V7.500z" fill="#b8b8b8"/></svg>
<svg style="left:38.500px;top:607px;z-index:3" width="11" height="11" viewBox="0 0 11 11"><path d="M4 0.500C2.500 0.500 3.300 5 0.500 5.300C3.300 5.600 2.500 10.300 4 10.300M6.800 0.500C8.300 0.500 7.500 5 10.300 5.300C7.500 5.600 8.300 10.300 6.800 10.300" fill="none" stroke="#b8b8b8" stroke-width="1.200"/><rect x="3.600" y="1.200" width="3.600" height="8.500" fill="#8a8a8a"/></svg>

<!-- partial next row -->
<div class="a" style="left:3px;top:601px;width:472px;height:3px;background:#2d2d2d;z-index:2"></div>
<div class="a" style="left:5px;top:602px;width:12px;height:2px;background:#232323;z-index:3"></div>
<div class="a" style="left:32px;top:602px;width:12px;height:2px;background:#232323;z-index:3"></div>
<div class="a" style="left:45px;top:602px;width:12px;height:2px;background:#232323;z-index:3"></div>
<div class="a" style="left:77px;top:602px;width:13px;height:2px;background:#d0182c;z-index:3"></div>
<div class="a" style="left:239px;top:602px;width:12px;height:2px;background:#232323;z-index:3"></div>
<div class="a" style="left:253px;top:602px;width:11px;height:2px;background:#232323;z-index:3"></div>
<div class="a" style="left:266px;top:602px;width:12px;height:2px;background:#232323;z-index:3"></div>
<div class="a" style="left:306px;top:602px;width:12px;height:2px;background:#232323;z-index:3"></div>
<div class="a" style="left:319px;top:602px;width:12px;height:2px;background:#232323;z-index:3"></div>
<div class="a" style="left:333px;top:602px;width:12px;height:2px;background:#232323;z-index:3"></div>
<div class="a" style="left:378px;top:602px;width:79px;height:2px;background:#1f1f1f;z-index:3"></div>

<!-- comp footer icons -->
<svg style="left:294px;top:372.500px" width="13" height="10" viewBox="0 0 13 10"><path d="M2.500 6.500v1.300h8.300V2.500h-1.300M4.500 8.500v1h8V4.500h-1.200" fill="none" stroke="#a8a8a8" stroke-width="1"/><rect x="0" y="0.300" width="8.500" height="5.400" fill="#c4c4c4"/><path d="M3.200 1.300v3.400L6 3z" fill="#333"/></svg>
<svg style="left:314px;top:372px" width="12" height="11" viewBox="0 0 12 11"><rect x="0.650" y="0.650" width="10" height="6.300" fill="none" stroke="#bcbcbc" stroke-width="1.300"/><path d="M2 10Q5.600 7.500 9.300 10z" fill="#bcbcbc"/></svg>
<svg style="left:380px;top:376px" width="7" height="4" viewBox="0 0 7 4"><path d="M0.300 0.300L3.300 3.300L6.300 0.300" fill="none" stroke="#b8b8b8" stroke-width="1.100"/></svg>
<svg style="left:394px;top:371px" width="14" height="13" viewBox="0 0 14 13"><rect x="1.500" y="1.800" width="11" height="7" fill="none" stroke="#bcbcbc" stroke-width="1.300"/><path d="M7 0v3M7 7.500v3M0 5.300h2.500M11.500 5.300h2.500" stroke="#bcbcbc" stroke-width="1"/><rect x="6.300" y="4.600" width="1.400" height="1.400" fill="#bcbcbc"/><path d="M8.700 11h4l-2 2z" fill="#c8c8c8"/></svg>
<svg style="left:414px;top:371.500px" width="14" height="12" viewBox="0 0 14 12"><path d="M1.200 5.500L6 1.100H12.300V10H1.200z" fill="none" stroke="#1e8ce6" stroke-width="1.300"/><g fill="#1e8ce6"><circle cx="1.200" cy="5.500" r="1.250"/><circle cx="6" cy="1.100" r="1.250"/><circle cx="12.300" cy="1.100" r="1.250"/><circle cx="12.300" cy="5.500" r="1.100"/><circle cx="12.300" cy="10" r="1.250"/><circle cx="1.200" cy="10" r="1.250"/></g></svg>
<svg style="left:496px;top:372.500px" width="13" height="11" viewBox="0 0 13 11"><path d="M0 2h4l0.800-1.800h3.400L9 2h4v8.300H0z" fill="#c0c0c0"/><circle cx="6.500" cy="5.800" r="2.500" fill="#c0c0c0" stroke="#2e2e2e" stroke-width="1.100"/></svg>
<svg style="left:515px;top:371px" width="14" height="12" viewBox="0 0 14 12"><path d="M0 7.600Q5.500 1.500 11 7.600Q5.500 13 0 7.600z" fill="none" stroke="#3c3c3c" stroke-width="1.300"/><circle cx="5.500" cy="7.500" r="1.600" fill="#3c3c3c"/><path d="M6.500 2.500Q10 -1 12.500 3.500" fill="none" stroke="#3c3c3c" stroke-width="1.300"/><path d="M10.500 4.500h3.500v-3z" fill="#3c3c3c"/></svg>
<svg style="left:536px;top:370.800px" width="12" height="14" viewBox="0 0 12 14"><circle cx="2.800" cy="7.200" r="2.700" fill="#00c41e"/><circle cx="7.500" cy="7.200" r="2.700" fill="#3c5cff"/><circle cx="5.200" cy="2.800" r="2.700" fill="#ff0000"/><path d="M7.300 11h4.200l-2.100 2.300z" fill="#c8c8c8"/></svg>
<svg style="left:619.5px;top:376px" width="7" height="4" viewBox="0 0 7 4"><path d="M0.300 0.300L3.300 3.300L6.300 0.300" fill="none" stroke="#b8b8b8" stroke-width="1.100"/></svg>
<svg style="left:634px;top:372px" width="13" height="11" viewBox="0 0 13 11"><rect x="0.600" y="0.600" width="11.800" height="9.800" fill="#1a1a1a" stroke="#b8b8b8" stroke-width="1.200"/><rect x="4" y="3.700" width="6.200" height="4.300" fill="#c8c8c8"/></svg>
<svg style="left:654px;top:373px" width="13" height="10" viewBox="0 0 13 10"><rect x="0.500" y="0.500" width="11.600" height="9" fill="#222" stroke="#a0a0a0" stroke-width="1"/><g fill="#8c8c8c"><rect x="1" y="1" width="2.800" height="2.700"/><rect x="6.500" y="1" width="2.800" height="2.700"/><rect x="3.800" y="3.700" width="2.700" height="2.700"/><rect x="9.300" y="3.700" width="2.400" height="2.700"/><rect x="1" y="6.400" width="2.800" height="2.600"/><rect x="6.500" y="6.400" width="2.800" height="2.600"/></g></svg>
<svg style="left:754.5px;top:376px" width="7" height="4" viewBox="0 0 7 4"><path d="M0.300 0.300L3.300 3.300L6.300 0.300" fill="none" stroke="#b8b8b8" stroke-width="1.100"/></svg>
<svg style="left:820px;top:376px" width="7" height="4" viewBox="0 0 7 4"><path d="M0.300 0.300L3.300 3.300L6.300 0.300" fill="none" stroke="#b8b8b8" stroke-width="1.100"/></svg>
<svg style="left:834.500px;top:372px" width="14" height="11" viewBox="0 0 14 11"><path d="M0 2L3 0v4zM14 2L11 0v4zM2.500 2h9" fill="#c0c0c0" stroke="#c0c0c0" stroke-width="1"/><rect x="4.200" y="5.900" width="6" height="4.400" fill="none" stroke="#c0c0c0" stroke-width="1.200"/></svg>
<svg style="left:855px;top:372px" width="13" height="11" viewBox="0 0 13 11"><rect x="0.600" y="0.600" width="11.500" height="9.600" fill="#101010" stroke="#c0c0c0" stroke-width="1.200"/><path d="M7 1.800L4 5.800h2L5 9L8.500 4.800H6.500z" fill="#b0b0b0"/><rect x="7" y="7.500" width="6" height="4" fill="#171717"/><path d="M7.800 8.200h4.600l-2.300 2.600z" fill="#c8c8c8"/></svg>
<svg style="left:875px;top:371.800px" width="13" height="10" viewBox="0 0 13 10"><path d="M0.600 1.800V8.700H11.600V1.800" fill="none" stroke="#c0c0c0" stroke-width="1.200"/><path d="M3 5.200v3.500M6.300 2v6.700M9.400 5.200v3.500" stroke="#c0c0c0" stroke-width="1.200"/><rect x="4" y="0" width="4.700" height="2.500" fill="#c0c0c0"/></svg>
<svg style="left:894px;top:371.800px" width="12" height="11" viewBox="0 0 12 11"><rect x="3.800" y="0" width="4.300" height="3.600" fill="#c8c8c8"/><rect x="0" y="7.400" width="4.700" height="3.500" fill="#c8c8c8"/><rect x="7.300" y="7.400" width="4.700" height="3.500" fill="#c8c8c8"/><path d="M6 3.600v2M2.300 7.400V5.600h7.400v1.800" fill="none" stroke="#c8c8c8" stroke-width="1"/></svg>
<svg style="left:915.800px;top:371.700px" width="12" height="12" viewBox="0 0 12 12"><circle cx="5.700" cy="5.700" r="5.600" fill="#b8b8b8"/><path d="M11.30 5.70A5.6 5.6 0 0 1 8.50 10.55L5.32 7.87z" fill="#b8b8b8" stroke="#262626" stroke-width="0.500"/><path d="M8.50 10.55A5.6 5.6 0 0 1 2.90 10.55L3.63 6.45z" fill="#b8b8b8" stroke="#262626" stroke-width="0.500"/><path d="M2.90 10.55A5.6 5.6 0 0 1 0.10 5.70L4.01 4.29z" fill="#b8b8b8" stroke="#262626" stroke-width="0.500"/><path d="M0.10 5.70A5.6 5.6 0 0 1 2.90 0.85L6.08 3.53z" fill="#b8b8b8" stroke="#262626" stroke-width="0.500"/><path d="M2.90 0.85A5.6 5.6 0 0 1 8.50 0.85L7.77 4.95z" fill="#b8b8b8" stroke="#262626" stroke-width="0.500"/><path d="M8.50 0.85A5.6 5.6 0 0 1 11.30 5.70L7.39 7.11z" fill="#b8b8b8" stroke="#262626" stroke-width="0.500"/><circle cx="5.700" cy="5.700" r="1.900" fill="#2a2a2a"/></svg>
</body>
</html>
